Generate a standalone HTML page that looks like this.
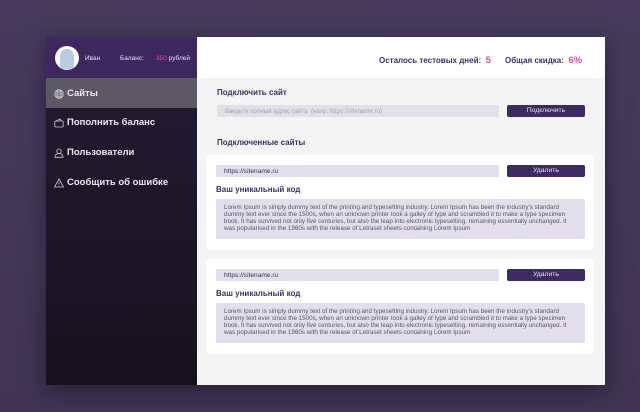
<!DOCTYPE html>
<html><head><meta charset="utf-8"><style>
*{margin:0;padding:0;box-sizing:border-box}
body{width:640px;height:412px;overflow:hidden;background:linear-gradient(180deg,#463b5c 0%,#3f3552 100%);font-family:"Liberation Sans","DejaVu Sans",sans-serif;position:relative}
.panel{position:absolute;left:46px;top:37px;width:559px;height:348px;box-shadow:0 6px 20px rgba(20,10,35,.5)}
.side{position:absolute;left:0;top:0;width:151px;height:348px;background:linear-gradient(180deg,#241c33,#17111f)}
.sh{position:absolute;left:0;top:0;width:151px;height:41px;background:#3d2960}
.av{position:absolute;left:9px;top:9px;width:24px;height:24px;border-radius:50%;background:#fff;overflow:hidden}
.av i{position:absolute;left:5px;top:3px;width:14px;height:20px;background:#b8cde0;border-radius:7px 7px 3px 3px}
.sh span{position:absolute;top:18px;font-size:6.5px;color:#e6e0f0}
.act{position:absolute;left:0;top:41px;width:151px;height:30px;background:#5d5866}
.it{position:absolute;left:8px;font-size:9.5px;color:#eeeaf3;font-weight:bold;display:flex;align-items:center;gap:3px}
.it svg{width:10px;height:10px}
.main{position:absolute;left:151px;top:0;width:408px;height:348px;background:#f4f4f5}
.mh{position:absolute;left:0;top:0;width:408px;height:41px;background:#fff}
.st{position:absolute;top:18px;font-size:8px;font-weight:bold;color:#3d2e63}
.pk{color:#e8479c;font-size:9.5px}
.t{position:absolute;font-size:8px;font-weight:bold;color:#3d2e63}
.in{position:absolute;height:12px;background:#e2dfea;border-radius:2px;font-size:6.1px;color:#a9a3b8;padding:2.5px 0 0 8px}
.bt{position:absolute;height:12px;width:78px;background:#3e2a63;border-radius:2px;color:#e7e1f1;font-size:6.8px;text-align:center;line-height:12px}
.card{position:absolute;left:9px;width:388px;height:95px;background:#fff;border-radius:3px}
.code{position:absolute;left:10px;top:44px;width:369px;height:40px;background:#e2dfea;border-radius:2px;font-size:6.25px;line-height:7px;color:#5b5472;padding:5px 6px 0 8px}
</style></head><body>
<div class="panel">
<div class="side">
<div class="sh"><div class="av"><i></i></div><span style="left:39px">Иван</span><span style="left:74px">Баланс:</span><span style="left:110px"><b style="color:#e8479c;font-weight:normal">350</b> рублей</span></div>
<div class="act"></div>
<div class="it" style="top:51px"><svg viewBox="0 0 10 10" fill="none" stroke="#ccc" stroke-width=".8"><circle cx="5" cy="5" r="4.3"/><ellipse cx="5" cy="5" rx="2" ry="4.3"/><path d="M.7 5h8.6M1.5 2.8h7M1.5 7.2h7"/></svg>Сайты</div>
<div class="it" style="top:80px"><svg viewBox="0 0 10 10" fill="none" stroke="#ccc" stroke-width=".8"><rect x=".8" y="3" width="8.4" height="6" rx="1"/><path d="M2 3l4-2 1.5 2"/></svg>Пополнить баланс</div>
<div class="it" style="top:110px"><svg viewBox="0 0 10 10" fill="none" stroke="#ccc" stroke-width=".8"><circle cx="5" cy="3.2" r="2.2"/><path d="M1 9.3c0-3 1.8-3.8 4-3.8s4 .8 4 3.8z"/></svg>Пользователи</div>
<div class="it" style="top:140px"><svg viewBox="0 0 10 10" fill="none" stroke="#ccc" stroke-width=".8"><path d="M5 .8L9.4 9H.6z M5 3.8v2.6M5 7.4v.6"/></svg>Сообщить об ошибке</div>
</div>
<div class="main">
<div class="mh"><div class="st" style="left:182px">Осталось тестовых дней: &nbsp;<span class="pk">5</span></div><div class="st" style="left:308px">Общая скидка: &nbsp;<span class="pk">6%</span></div></div>
<div class="t" style="left:20px;top:51px">Подключить сайт</div>
<div class="in" style="left:20px;top:68px;width:282px">Введите полный адрес сайта &nbsp;(напр. https://sitename.ru)</div>
<div class="bt" style="left:310px;top:68px">Подключить</div>
<div class="t" style="left:20px;top:101px">Подключенные сайты</div>
<div class="card" style="top:118px"><div class="in" style="left:10px;top:10px;width:283px;color:#3d2e63;font-size:6.6px">https://sitename.ru</div><div class="bt" style="left:301px;top:10px">Удалить</div><div class="t" style="left:10px;top:30px">Ваш уникальный код</div><div class="code">Lorem Ipsum is simply dummy text of the printing and typesetting industry. Lorem Ipsum has been the industry's standard dummy text ever since the 1500s, when an unknown printer took a galley of type and scrambled it to make a type specimen book. It has survived not only five centuries, but also the leap into electronic typesetting, remaining essentially unchanged. It was popularised in the 1960s with the release of Letraset sheets containing Lorem Ipsum</div></div>
<div class="card" style="top:222px"><div class="in" style="left:10px;top:10px;width:283px;color:#3d2e63;font-size:6.6px">https://sitename.ru</div><div class="bt" style="left:301px;top:10px">Удалить</div><div class="t" style="left:10px;top:30px">Ваш уникальный код</div><div class="code">Lorem Ipsum is simply dummy text of the printing and typesetting industry. Lorem Ipsum has been the industry's standard dummy text ever since the 1500s, when an unknown printer took a galley of type and scrambled it to make a type specimen book. It has survived not only five centuries, but also the leap into electronic typesetting, remaining essentially unchanged. It was popularised in the 1960s with the release of Letraset sheets containing Lorem Ipsum</div></div>
</div>
</div>
</body></html>
